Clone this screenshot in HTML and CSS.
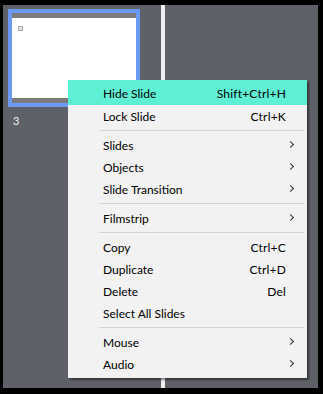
FILE: index.html
```html
<!DOCTYPE html>
<html>
<head>
<meta charset="utf-8">
<link rel="stylesheet" href="styles.css">
</head>
<body>
<div class="frame">
  <div class="filmstrip">
    <div class="thumb">
      <div class="thumb-bar"></div>
      <div class="thumb-page"><span class="thumb-icon"></span></div>
      <div class="thumb-bar"></div>
    </div>
    <div class="thumb-num">3</div>
  </div>
  <div class="divider"></div>
  <div class="stage"></div>

  <div class="menu">
    <div class="item active"><span class="label">Hide Slide</span><span class="key">Shift+Ctrl+H</span></div>
    <div class="item"><span class="label">Lock Slide</span><span class="key">Ctrl+K</span></div>
    <div class="sep"></div>
    <div class="item"><span class="label">Slides</span><span class="arrow"></span></div>
    <div class="item"><span class="label">Objects</span><span class="arrow"></span></div>
    <div class="item"><span class="label">Slide Transition</span><span class="arrow"></span></div>
    <div class="sep"></div>
    <div class="item"><span class="label">Filmstrip</span><span class="arrow"></span></div>
    <div class="sep"></div>
    <div class="item"><span class="label">Copy</span><span class="key">Ctrl+C</span></div>
    <div class="item"><span class="label">Duplicate</span><span class="key">Ctrl+D</span></div>
    <div class="item"><span class="label">Delete</span><span class="key">Del</span></div>
    <div class="item"><span class="label">Select All Slides</span></div>
    <div class="sep"></div>
    <div class="item"><span class="label">Mouse</span><span class="arrow"></span></div>
    <div class="item"><span class="label">Audio</span><span class="arrow"></span></div>
  </div>
</div>
</body>
</html>
```
FILE: styles.css
```css
html, body {
  margin: 0;
  padding: 0;
  background: #000;
  width: 323px;
  height: 394px;
  overflow: hidden;
  font-family: "Lato", "Noto Sans", sans-serif;
}
.frame {
  position: relative;
  margin: 5px 5px 0 3px;
  height: 383px;
  display: flex;
  background: #5f6168;
}
.filmstrip {
  width: 158px;
  padding: 4px 0 0 5px;
  box-sizing: border-box;
}
.thumb {
  width: 132px;
  height: 98px;
  box-sizing: border-box;
  border: 4px solid #6a9af3;
  display: flex;
  flex-direction: column;
}
.thumb-bar {
  height: 5px;
  background: #7b7b7b;
}
.thumb-page {
  flex: 1;
  background: #fff;
  padding: 8px 0 0 6px;
}
.thumb-icon {
  display: block;
  width: 3px;
  height: 3px;
  border: 1px solid #a8a8a8;
  background: #e6e6e6;
}
.thumb-num {
  color: #f2f2f2;
  font-size: 11px;
  line-height: 14px;
  margin: 7px 0 0 5px;
}
.divider {
  width: 4px;
  background: #efefef;
}
.stage {
  flex: 1;
}
.menu {
  position: absolute;
  left: 65px;
  top: 75px;
  width: 239px;
  background: #f2f2f2;
  box-shadow: 2px 2px 2px rgba(0, 0, 0, 0.45);
  padding: 0 0 3px 0;
  font-size: 12px;
  color: #000;
}
.item {
  display: flex;
  align-items: center;
  height: 22px;
  padding: 0 21px 0 35px;
  position: relative;
}
.item.active {
  background: #5ef0d4;
  height: 25px;
  padding-top: 2px;
  box-sizing: border-box;
}
.label {
  flex: 1;
  white-space: nowrap;
}
.key {
  white-space: nowrap;
  letter-spacing: 0.2px;
}
.arrow {
  position: absolute;
  right: 14px;
  top: 8px;
  width: 4px;
  height: 4px;
  border-right: 1px solid #333;
  border-top: 1px solid #333;
  transform: rotate(45deg);
}
.sep {
  height: 1px;
  background: #d4d4d4;
  margin: 3px 3px 3px 31px;
}
```
